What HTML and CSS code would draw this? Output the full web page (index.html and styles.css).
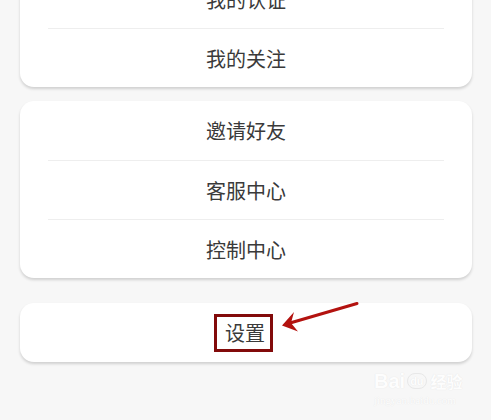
FILE: index.html
```html
<!DOCTYPE html>
<html lang="zh-CN">
<head>
<meta charset="utf-8">
<link rel="stylesheet" href="styles.css">
</head>
<body>
<div class="page">
  <div class="card first">
    <div class="row">我的认证</div>
    <div class="row">我的关注</div>
  </div>
  <div class="card">
    <div class="row">邀请好友</div>
    <div class="row">客服中心</div>
    <div class="row">控制中心</div>
  </div>
  <div class="card last">
    <div class="row"><span class="mark">设置</span></div>
  </div>
</div>
<svg class="arrow" width="491" height="420" viewBox="0 0 491 420">
  <line x1="357" y1="303.5" x2="290" y2="323" stroke="#b3120f" stroke-width="3" stroke-linecap="round"/>
  <path d="M282 325.5 L294 312 L291 323 L298 331.5 Z" fill="#b3120f"/>
</svg>
<div class="watermark">
  <div class="wm-top"><span class="wm-bai">Bai</span><span class="wm-paw">du</span><span class="wm-cn">经验</span></div>
  <div class="wm-url">jingyan.baidu.com</div>
</div>
</body>
</html>
```
FILE: styles.css
```css
html, body {
  margin: 0;
  padding: 0;
  background: #f7f7f7;
  width: 491px;
  height: 420px;
  overflow: hidden;
}
body {
  font-family: "Noto Sans CJK SC", "Noto Sans", sans-serif;
  color: #3a3a3a;
  position: relative;
}
.page {
  display: flex;
  flex-direction: column;
  gap: 14px;
  padding: 0 19px 0 20px;
  margin-top: -30px;
}
.card {
  background: #fff;
  border-radius: 14px;
  box-shadow: 0 2px 3px rgba(0,0,0,0.16);
  padding: 0 28px;
  display: flex;
  flex-direction: column;
}
.card.last {
  margin-top: 11px;
}
.row {
  height: 58px;
  display: flex;
  align-items: center;
  justify-content: center;
  font-size: 20px;
  border-top: 1px solid #eeeeee;
}
.row:first-child {
  border-top: none;
  height: 59px;
}
.card.first .row:first-child {
  height: 58px;
}
.mark {
  display: inline-block;
  border: 3px solid #820a0a;
  padding: 2px 5px 2px 8px;
  line-height: 28px;
  margin-right: 5px;
}
.arrow {
  position: absolute;
  left: 0;
  top: 0;
  pointer-events: none;
}
.watermark {
  position: absolute;
  left: 374px;
  top: 370px;
  color: #fff;
  text-shadow: 0 0 1px #dcdcdc;
  font-family: "Liberation Sans", sans-serif;
  opacity: 0.85;
}
.wm-top {
  display: flex;
  align-items: center;
  font-size: 20px;
  font-weight: bold;
  line-height: 22px;
}
.wm-paw {
  font-size: 11px;
  margin: 0 4px 0 2px;
  border-radius: 8px;
  border: 1px solid #e6e6e6;
  padding: 0 2px;
  line-height: 14px;
}
.wm-cn {
  font-family: "Noto Sans CJK SC", sans-serif;
  font-size: 16px;
}
.wm-url {
  font-family: "Liberation Serif", serif;
  font-size: 11px;
  margin-top: 2px;
}
```
